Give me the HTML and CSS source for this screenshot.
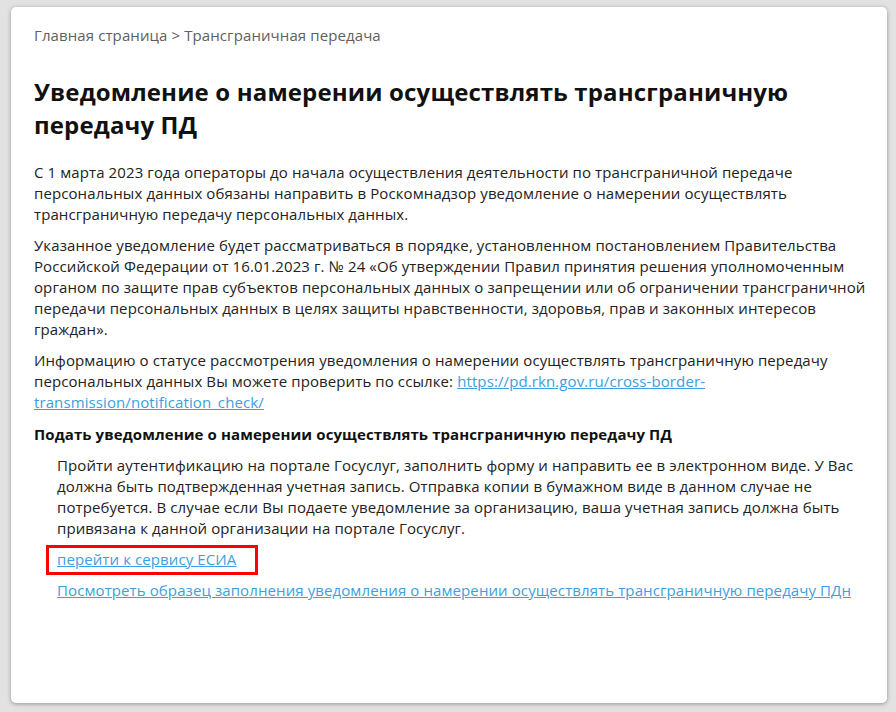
FILE: index.html
```html
<!DOCTYPE html>
<html lang="ru">
<head>
    <meta charset="UTF-8">
    <meta name="viewport" content="width=device-width, initial-scale=1.0">
    <title>Трансграничная передача</title>
    <link rel="stylesheet" href="styles.css">
</head>
<body>
    <div class="card">
        <div class="breadcrumbs">
            <a href="#" class="crumb">Главная страница</a> &gt; <span>Трансграничная передача</span>
        </div>

        <h1 class="title">Уведомление о намерении осуществлять трансграничную передачу ПД</h1>

        <p>С 1 марта 2023 года операторы до начала осуществления деятельности по трансграничной передаче персональных данных обязаны направить в Роскомнадзор уведомление о намерении осуществлять трансграничную передачу персональных данных.</p>

        <p>Указанное уведомление будет рассматриваться в порядке, установленном постановлением Правительства Российской Федерации от 16.01.2023 г. № 24 «Об утверждении Правил принятия решения уполномоченным органом по защите прав субъектов персональных данных о запрещении или об ограничении трансграничной передачи персональных данных в целях защиты нравственности, здоровья, прав и законных интересов граждан».</p>

        <p>Информацию о статусе рассмотрения уведомления о намерении осуществлять трансграничную передачу персональных данных Вы можете проверить по ссылке: <a href="#" class="link">https://pd.rkn.gov.ru/cross-border-transmission/notification_check/</a></p>

        <h2 class="subtitle">Подать уведомление о намерении осуществлять трансграничную передачу ПД</h2>

        <div class="section">
            <p>Пройти аутентификацию на портале Госуслуг, заполнить форму и направить ее в электронном виде. У Вас должна быть подтвержденная учетная запись. Отправка копии в бумажном виде в данном случае не потребуется. В случае если Вы подаете уведомление за организацию, ваша учетная запись должна быть привязана к данной организации на портале Госуслуг.</p>
            <p><a href="#" class="link highlight">перейти к сервису ЕСИА</a></p>
            <p><a href="#" class="link">Посмотреть образец заполнения уведомления о намерении осуществлять трансграничную передачу ПДн</a></p>
        </div>
    </div>
</body>
</html>
```

FILE: styles.css
```css
body {
    margin: 0;
    padding: 7px 9px 9px 11px;
    background-color: #e2e2e2;
    font-family: "Open Sans", Arial, sans-serif;
    color: #222;
}

.card {
    height: 696px;
    box-sizing: border-box;
    padding: 18px 14px 0 23px;
    background: #fff;
    border-radius: 5px;
    box-shadow: 0 1px 4px rgba(0, 0, 0, 0.35);
}

.breadcrumbs {
    font-size: 15px;
    line-height: 20px;
    letter-spacing: 0.1px;
    color: #606060;
}

.crumb {
    color: #606060;
    text-decoration: none;
}

.title {
    margin: 30px 0 21px;
    font-size: 24px;
    line-height: 33px;
    font-weight: 700;
    letter-spacing: 0.15px;
    color: #111;
}

p {
    margin: 10px 0 0;
    font-size: 15px;
    line-height: 21px;
    letter-spacing: 0.1px;
}

.subtitle {
    margin: 11px 0 0;
    font-size: 15px;
    line-height: 21px;
    font-weight: 700;
    letter-spacing: 0.1px;
    color: #111;
}

.section {
    padding-left: 23px;
}

.link {
    color: #3d9ee0;
}

.highlight {
    position: relative;
}

/* red frame around the ESIA link */
.highlight::after {
    content: "";
    position: absolute;
    top: -4px;
    left: -11px;
    right: -22px;
    bottom: -6px;
    border: 3px solid #f00;
}
```
